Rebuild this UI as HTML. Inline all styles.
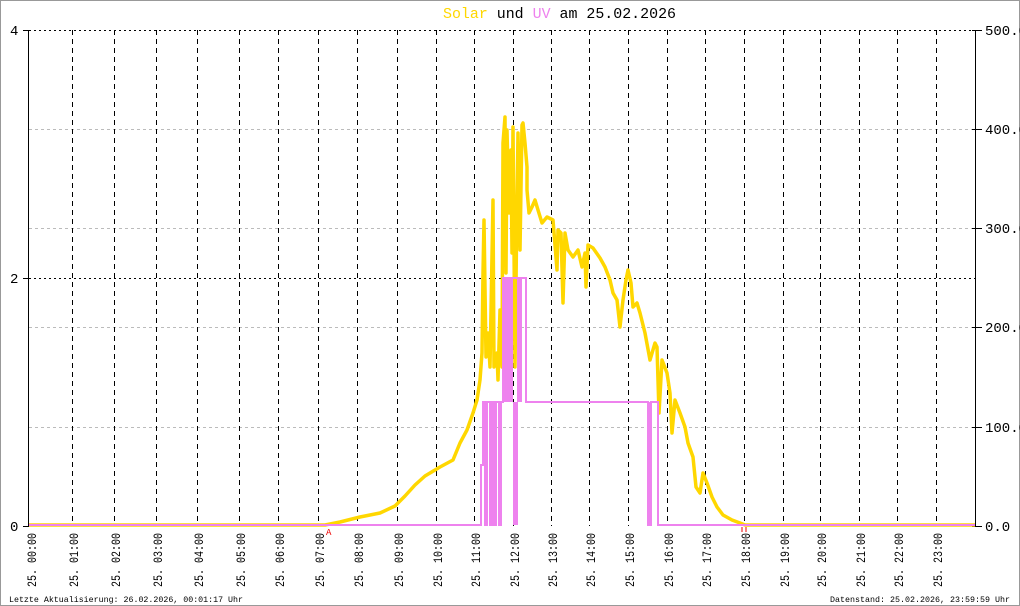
<!DOCTYPE html>
<html><head><meta charset="utf-8"><style>
html,body{margin:0;padding:0;background:#fff;}
svg{display:block;font-family:"Liberation Mono",monospace;}
</style></head><body>
<svg width="1020" height="606" viewBox="0 0 1020 606" xmlns="http://www.w3.org/2000/svg">
<rect x="0.5" y="0.5" width="1019" height="605" fill="#fff" stroke="#999" stroke-width="1"/>
<text x="443" y="18" font-size="15" textLength="233" lengthAdjust="spacingAndGlyphs"><tspan fill="#ffd700">Solar</tspan> und <tspan fill="#ee82ee">UV</tspan> am 25.02.2026</text>
<g stroke="#bbb" stroke-width="1" stroke-dasharray="3,3">
<line x1="29" y1="129.5" x2="975" y2="129.5"/>
<line x1="29" y1="228.5" x2="975" y2="228.5"/>
<line x1="29" y1="327.5" x2="975" y2="327.5"/>
<line x1="29" y1="427.5" x2="975" y2="427.5"/>
</g>
<g stroke="#000" stroke-width="1" stroke-dasharray="2,3">
<line x1="29" y1="30.5" x2="975" y2="30.5"/>
<line x1="29" y1="278.5" x2="975" y2="278.5"/>
</g>
<g stroke="#000" stroke-width="1" stroke-dasharray="5,4">
<line x1="72.5" y1="30" x2="72.5" y2="526"/>
<line x1="114.5" y1="30" x2="114.5" y2="526"/>
<line x1="156.5" y1="30" x2="156.5" y2="526"/>
<line x1="197.5" y1="30" x2="197.5" y2="526"/>
<line x1="239.5" y1="30" x2="239.5" y2="526"/>
<line x1="278.5" y1="30" x2="278.5" y2="526"/>
<line x1="318.5" y1="30" x2="318.5" y2="526"/>
<line x1="357.5" y1="30" x2="357.5" y2="526"/>
<line x1="397.5" y1="30" x2="397.5" y2="526"/>
<line x1="436.5" y1="30" x2="436.5" y2="526"/>
<line x1="474.5" y1="30" x2="474.5" y2="526"/>
<line x1="513.5" y1="30" x2="513.5" y2="526"/>
<line x1="551.5" y1="30" x2="551.5" y2="526"/>
<line x1="589.5" y1="30" x2="589.5" y2="526"/>
<line x1="628.5" y1="30" x2="628.5" y2="526"/>
<line x1="667.5" y1="30" x2="667.5" y2="526"/>
<line x1="705.5" y1="30" x2="705.5" y2="526"/>
<line x1="744.5" y1="30" x2="744.5" y2="526"/>
<line x1="783.5" y1="30" x2="783.5" y2="526"/>
<line x1="820.5" y1="30" x2="820.5" y2="526"/>
<line x1="859.5" y1="30" x2="859.5" y2="526"/>
<line x1="897.5" y1="30" x2="897.5" y2="526"/>
<line x1="936.5" y1="30" x2="936.5" y2="526"/>
</g>
<g stroke="#000" stroke-width="1">
<line x1="28.5" y1="30" x2="28.5" y2="527"/>
<line x1="975.5" y1="30" x2="975.5" y2="527"/>
<line x1="23" y1="30.5" x2="29" y2="30.5"/>
<line x1="23" y1="278.5" x2="29" y2="278.5"/>
<line x1="23" y1="526.5" x2="29" y2="526.5"/>
<line x1="972" y1="30.5" x2="982" y2="30.5"/>
<line x1="972" y1="129.5" x2="982" y2="129.5"/>
<line x1="972" y1="228.5" x2="982" y2="228.5"/>
<line x1="972" y1="327.5" x2="982" y2="327.5"/>
<line x1="972" y1="427.5" x2="982" y2="427.5"/>
<line x1="972" y1="526.5" x2="982" y2="526.5"/>
</g>
<g font-size="14" fill="#000">
<text x="10" y="35">4</text>
<text x="10" y="283">2</text>
<text x="10" y="531">0</text>
<text x="985" y="35">500.0</text>
<text x="985" y="134">400.0</text>
<text x="985" y="233">300.0</text>
<text x="985" y="332">200.0</text>
<text x="985" y="432">100.0</text>
<text x="985" y="531">0.0</text>
</g>
<polyline fill="none" stroke="#ffd700" stroke-width="3.5" stroke-linejoin="round" points="29,525 325,525 340,522 360,517 380,513 395,506 405,496 415,485 425,476 435,470 440,467 453,460 460,443 467,430 473,413 477,400 480,380 482,353 483,273 484,220 486,357 488,333 490,367 493,200 494,367 497,353 498,380 500,310 502,367 503,143 505,117 506,273 507,130 509,213 511,150 512,253 513,127 515,367 517,200 518,133 520,250 522,125 523,123 525,143 527,167 527,190 529,213 532,207 535,200 538,210 542,223 547,217 553,220 557,270 558,230 561,233 563,303 565,233 568,250 573,257 578,250 582,267 585,253 586,287 588,245 593,248 600,258 605,267 610,280 613,293 617,300 620,327 623,300 626,280 628,270 631,283 633,307 637,303 640,313 645,333 650,360 655,343 657,347 659,413 662,360 667,373 670,393 672,433 675,400 680,413 685,427 688,443 693,457 696,487 700,493 703,473 707,483 712,497 717,507 723,515 732,520 740,523 745,525 975,525"/>
<g fill="#ee82ee">
<rect x="503" y="278" width="10" height="124"/>
<rect x="517" y="278" width="5" height="124"/>
<rect x="513" y="402" width="5" height="123"/>
<rect x="648" y="402" width="3" height="123"/>
</g>
<polyline fill="none" stroke="#ee82ee" stroke-width="2" points="29,525 481,525 481,465 483,465 483,402 485,402 485,525 487,525 487,402 490,402 490,525 492,525 492,402 494,402 494,525 496,525 496,402 499,402 499,525 501,525 501,402 503,402 503,278 526,278 526,402 648,402 648,525 651,525 651,402 658,402 658,525 975,525"/>
<text x="326" y="535" font-size="9" fill="#e00">A</text>
<line x1="742" y1="527" x2="742" y2="532" stroke="#e00" stroke-width="1"/>
<line x1="746" y1="527" x2="746" y2="532" stroke="#e00" stroke-width="1"/>
<g font-size="13" fill="#000">
<text transform="translate(36,587) rotate(-90)" textLength="54" lengthAdjust="spacingAndGlyphs">25. 00:00</text>
<text transform="translate(78,587) rotate(-90)" textLength="54" lengthAdjust="spacingAndGlyphs">25. 01:00</text>
<text transform="translate(120,587) rotate(-90)" textLength="54" lengthAdjust="spacingAndGlyphs">25. 02:00</text>
<text transform="translate(162,587) rotate(-90)" textLength="54" lengthAdjust="spacingAndGlyphs">25. 03:00</text>
<text transform="translate(203,587) rotate(-90)" textLength="54" lengthAdjust="spacingAndGlyphs">25. 04:00</text>
<text transform="translate(245,587) rotate(-90)" textLength="54" lengthAdjust="spacingAndGlyphs">25. 05:00</text>
<text transform="translate(284,587) rotate(-90)" textLength="54" lengthAdjust="spacingAndGlyphs">25. 06:00</text>
<text transform="translate(324,587) rotate(-90)" textLength="54" lengthAdjust="spacingAndGlyphs">25. 07:00</text>
<text transform="translate(363,587) rotate(-90)" textLength="54" lengthAdjust="spacingAndGlyphs">25. 08:00</text>
<text transform="translate(403,587) rotate(-90)" textLength="54" lengthAdjust="spacingAndGlyphs">25. 09:00</text>
<text transform="translate(442,587) rotate(-90)" textLength="54" lengthAdjust="spacingAndGlyphs">25. 10:00</text>
<text transform="translate(480,587) rotate(-90)" textLength="54" lengthAdjust="spacingAndGlyphs">25. 11:00</text>
<text transform="translate(519,587) rotate(-90)" textLength="54" lengthAdjust="spacingAndGlyphs">25. 12:00</text>
<text transform="translate(557,587) rotate(-90)" textLength="54" lengthAdjust="spacingAndGlyphs">25. 13:00</text>
<text transform="translate(595,587) rotate(-90)" textLength="54" lengthAdjust="spacingAndGlyphs">25. 14:00</text>
<text transform="translate(634,587) rotate(-90)" textLength="54" lengthAdjust="spacingAndGlyphs">25. 15:00</text>
<text transform="translate(673,587) rotate(-90)" textLength="54" lengthAdjust="spacingAndGlyphs">25. 16:00</text>
<text transform="translate(711,587) rotate(-90)" textLength="54" lengthAdjust="spacingAndGlyphs">25. 17:00</text>
<text transform="translate(750,587) rotate(-90)" textLength="54" lengthAdjust="spacingAndGlyphs">25. 18:00</text>
<text transform="translate(789,587) rotate(-90)" textLength="54" lengthAdjust="spacingAndGlyphs">25. 19:00</text>
<text transform="translate(826,587) rotate(-90)" textLength="54" lengthAdjust="spacingAndGlyphs">25. 20:00</text>
<text transform="translate(865,587) rotate(-90)" textLength="54" lengthAdjust="spacingAndGlyphs">25. 21:00</text>
<text transform="translate(903,587) rotate(-90)" textLength="54" lengthAdjust="spacingAndGlyphs">25. 22:00</text>
<text transform="translate(942,587) rotate(-90)" textLength="54" lengthAdjust="spacingAndGlyphs">25. 23:00</text>
</g>
<g font-size="8.3" fill="#000">
<text x="9" y="602" textLength="234" lengthAdjust="spacingAndGlyphs">Letzte Aktualisierung: 26.02.2026, 00:01:17 Uhr</text>
<text x="830" y="602" textLength="180" lengthAdjust="spacingAndGlyphs">Datenstand: 25.02.2026, 23:59:59 Uhr</text>
</g>
</svg>
</body></html>
